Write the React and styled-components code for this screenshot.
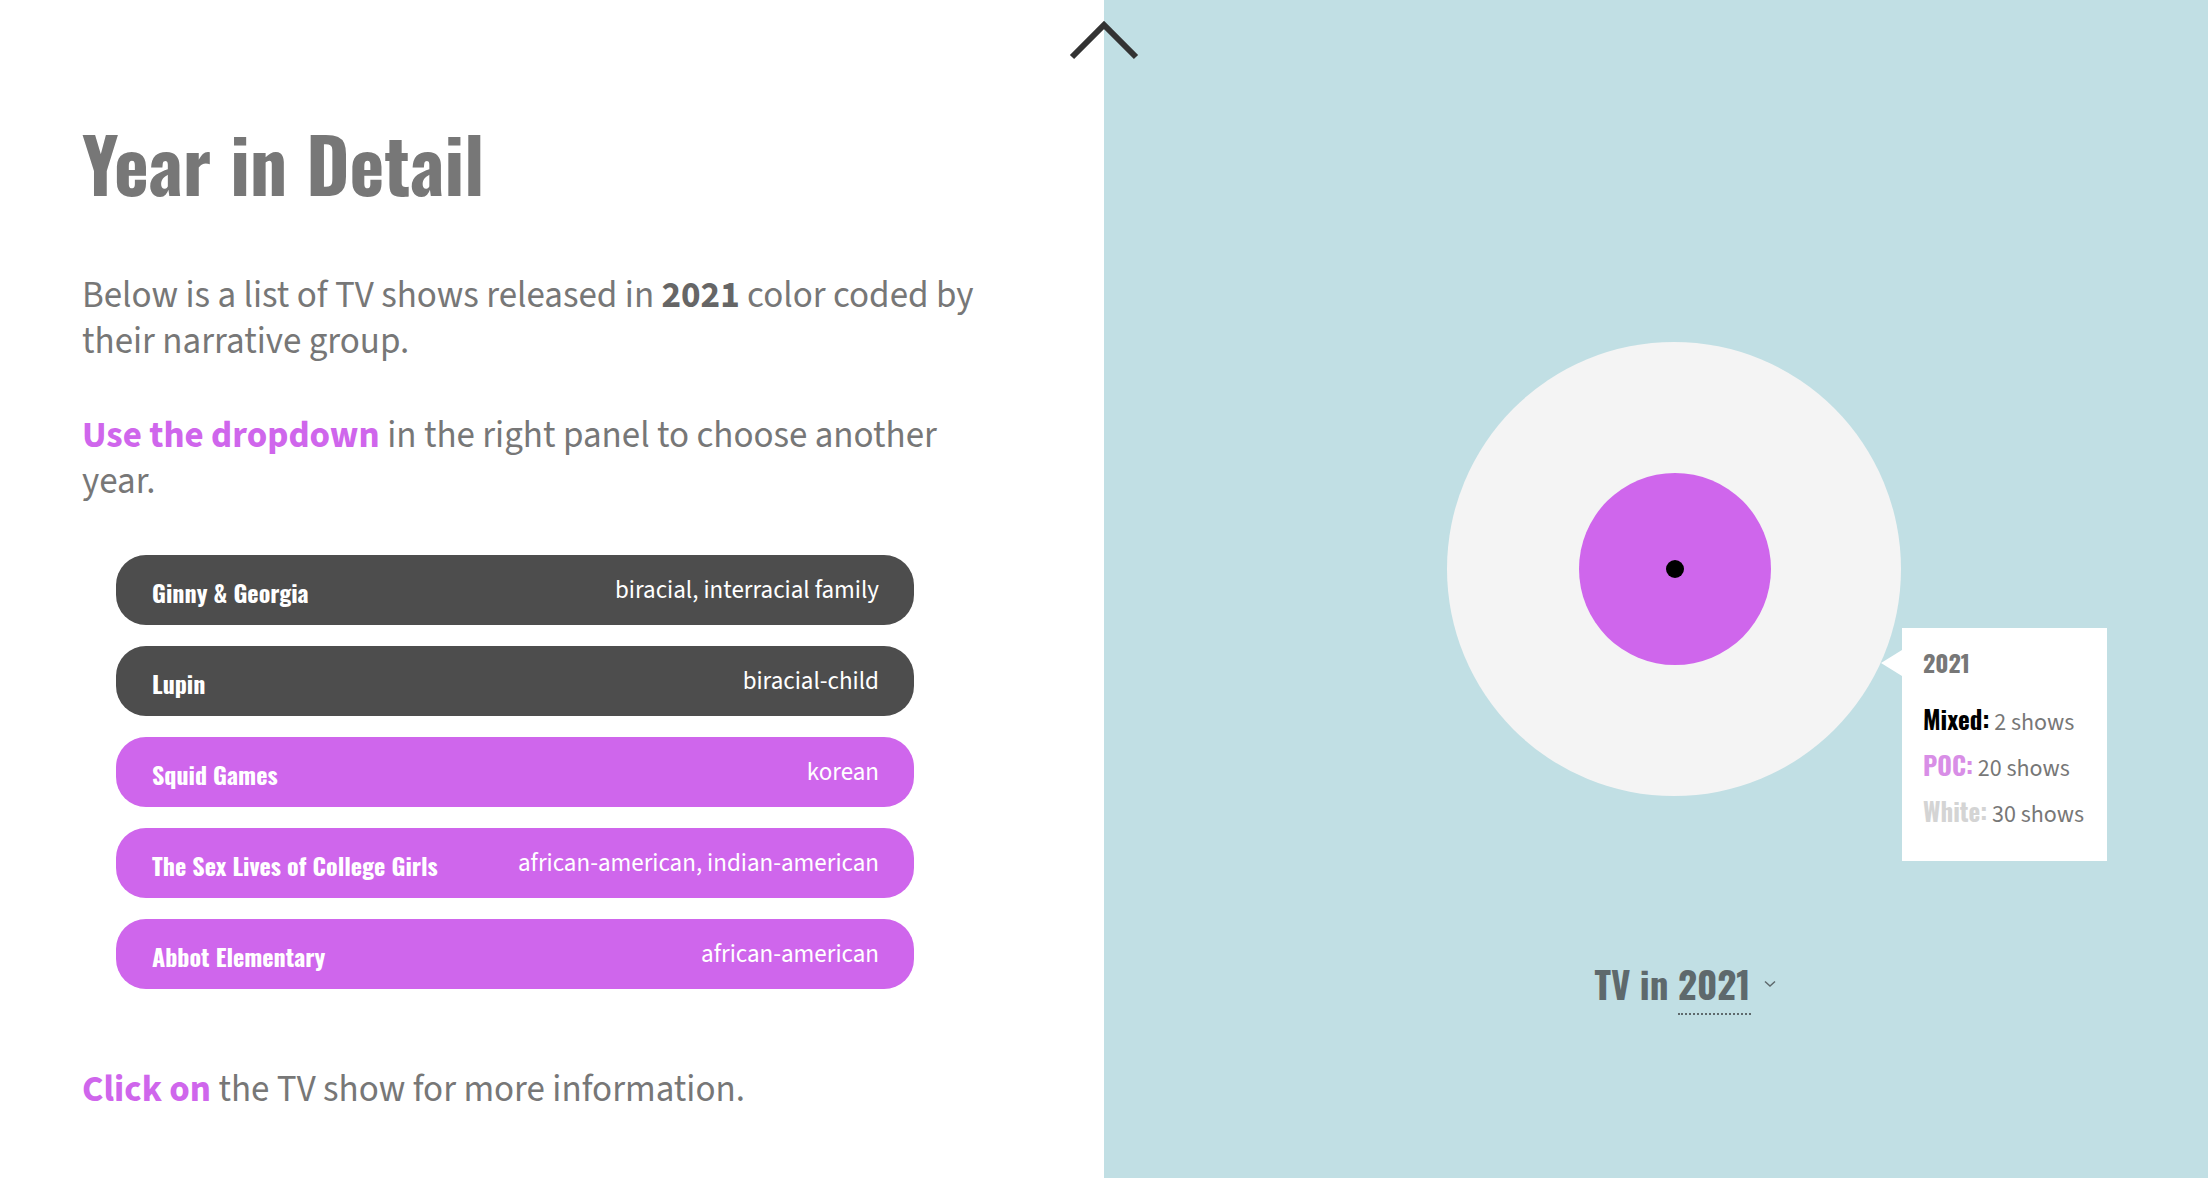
import React from 'react';
import styled, { createGlobalStyle } from 'styled-components';

const HEAD = `"Oswald", "Liberation Sans Narrow", "DejaVu Sans Condensed", "Roboto Condensed", Roboto, sans-serif`;
const BODY = `"Source Sans Pro", "Source Sans 3", Lato, "Liberation Sans", sans-serif`;
const PURPLE = '#cf66ec';

const GlobalStyle = createGlobalStyle`
  html, body {
    margin: 0;
    padding: 0;
    background: #fff;
  }
  body {
    font-family: ${BODY};
  }
`;

const Page = styled.div`
  position: relative;
  display: grid;
  grid-template-columns: 1104px 1104px;
  height: 1178px;
  overflow: hidden;
`;

const TopArrow = styled.svg`
  position: absolute;
  left: 1066px;
  top: 16px;
`;

const LeftPanel = styled.section`
  background: #fff;
  padding: 115px 0 0 82px;
  box-sizing: border-box;
`;

const Title = styled.h1`
  margin: 0;
  font-family: ${HEAD};
  font-weight: 700;
  font-size: 74px;
  line-height: 96px;
  color: #777;
`;

const Text = styled.p`
  margin: ${(p) => p.$mt || '0'} 0 0;
  width: 915px;
  font-family: ${BODY};
  font-size: 37px;
  line-height: 46px;
  color: #777;
`;

const Strong = styled.b`
  font-weight: 700;
  color: ${(p) => p.$color || '#666'};
`;

const ShowList = styled.ul`
  list-style: none;
  margin: 50px 0 0 34px;
  padding: 0;
  display: flex;
  flex-direction: column;
  gap: 21px;
  width: 798px;
`;

const Pill = styled.li`
  height: 70px;
  border-radius: 30px;
  background: ${(p) => (p.$mixed ? '#4d4d4d' : PURPLE)};
  color: #fff;
  display: flex;
  align-items: center;
  justify-content: space-between;
  padding: 0 35px 0 36px;
  box-sizing: border-box;
  cursor: pointer;
`;

const ShowName = styled.span`
  font-family: ${HEAD};
  font-weight: 700;
  font-size: 24px;
  padding-top: 4px;
`;

const Group = styled.span`
  font-family: ${BODY};
  font-size: 25px;
  font-weight: 400;
`;

const RightPanel = styled.section`
  background: #c1dfe4;
  padding: 341px 0 0 36px;
  box-sizing: border-box;
  display: flex;
  flex-direction: column;
  align-items: center;
`;

const Chart = styled.div`
  position: relative;
  width: 456px;
  height: 456px;
`;

const Tooltip = styled.div`
  position: absolute;
  left: 456px;
  top: 287px;
  width: 205px;
  height: 233px;
  background: #fff;
  box-sizing: border-box;
  padding: 18px 0 0 21px;

  &::before {
    content: '';
    position: absolute;
    left: -21px;
    top: 22px;
    border-style: solid;
    border-width: 13px 21px 13px 0;
    border-color: transparent #fff transparent transparent;
  }
`;

const TipYear = styled.div`
  font-family: ${HEAD};
  font-weight: 700;
  font-size: 24px;
  line-height: 32px;
  color: #777;
  margin-bottom: 22px;
`;

const TipRow = styled.div`
  font-family: ${BODY};
  font-size: 24px;
  line-height: 46px;
  height: 46px;
  color: #777;
  white-space: nowrap;
`;

const TipLabel = styled.span`
  font-family: ${HEAD};
  font-weight: 700;
  font-size: 25px;
  line-height: 1;
  color: ${(p) => p.$color};
`;

const YearPicker = styled.div`
  margin: 165px 0 0 22px;
  display: flex;
  align-items: center;
  gap: 13px;
  font-family: ${HEAD};
  font-weight: 700;
  font-size: 37px;
  line-height: 44px;
  color: #5e696c;
`;

const YearValue = styled.span`
  border-bottom: 2px dotted #5e696c;
  padding-bottom: 2px;
`;

const shows = [
  { name: 'Ginny & Georgia', group: 'biracial, interracial family', mixed: true },
  { name: 'Lupin', group: 'biracial-child', mixed: true },
  { name: 'Squid Games', group: 'korean' },
  { name: 'The Sex Lives of College Girls', group: 'african-american, indian-american' },
  { name: 'Abbot Elementary', group: 'african-american' },
];

export default function App() {
  return (
    <Page>
      <GlobalStyle />
      <LeftPanel>
        <Title>Year in Detail</Title>
        <Text $mt="62px">
          Below is a list of TV shows released in <Strong>2021</Strong> color coded by their
          narrative group.
        </Text>
        <Text $mt="48px">
          <Strong $color={PURPLE}>Use the dropdown</Strong> in the right panel to choose another
          year.
        </Text>
        <ShowList>
          {shows.map((s) => (
            <Pill key={s.name} $mixed={s.mixed}>
              <ShowName>{s.name}</ShowName>
              <Group>{s.group}</Group>
            </Pill>
          ))}
        </ShowList>
        <Text $mt="78px">
          <Strong $color={PURPLE}>Click on</Strong> the TV show for more information.
        </Text>
      </LeftPanel>

      <RightPanel>
        <Chart>
          <svg width="456" height="456" viewBox="0 0 456 456">
            <circle cx="228" cy="228" r="227" fill="#f4f4f4" />
            <circle cx="229" cy="228" r="96" fill={PURPLE} />
            <circle cx="229" cy="228" r="9" fill="#000" />
          </svg>
          <Tooltip>
            <TipYear>2021</TipYear>
            <TipRow>
              <TipLabel $color="#000">Mixed:</TipLabel> 2 shows
            </TipRow>
            <TipRow>
              <TipLabel $color="#d88ee6">POC:</TipLabel> 20 shows
            </TipRow>
            <TipRow>
              <TipLabel $color="#d4d4d4">White:</TipLabel> 30 shows
            </TipRow>
          </Tooltip>
        </Chart>
        <YearPicker>
          <span>
            TV in <YearValue>2021</YearValue>
          </span>
          <svg width="12" height="8" viewBox="0 0 12 8">
            <path d="M1 1.5 L6 6 L11 1.5" fill="none" stroke="#5e696c" strokeWidth="1.5" />
          </svg>
        </YearPicker>
      </RightPanel>

      <TopArrow width="76" height="48" viewBox="0 0 76 48">
        <path d="M6 41 L38 9 L70 41" fill="none" stroke="#333" strokeWidth="6" />
      </TopArrow>
    </Page>
  );
}
